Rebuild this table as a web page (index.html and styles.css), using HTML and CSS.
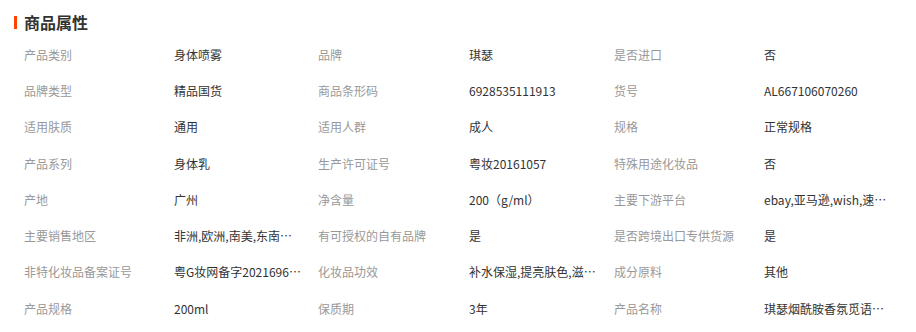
FILE: index.html
```html
<!DOCTYPE html>
<html lang="zh-CN">
<head>
<meta charset="utf-8">
<title>商品属性</title>
<link rel="stylesheet" href="styles.css">
</head>
<body>
<div class="attrs">
  <h2 class="attrs-title"><span class="attrs-bar"></span>商品属性</h2>
  <div class="attrs-grid">
    <div class="row">
      <span class="label">产品类别</span><span class="value">身体喷雾</span>
      <span class="label">品牌</span><span class="value">琪瑟</span>
      <span class="label">是否进口</span><span class="value">否</span>
    </div>
    <div class="row">
      <span class="label">品牌类型</span><span class="value">精品国货</span>
      <span class="label">商品条形码</span><span class="value">6928535111913</span>
      <span class="label">货号</span><span class="value">AL667106070260</span>
    </div>
    <div class="row">
      <span class="label">适用肤质</span><span class="value">通用</span>
      <span class="label">适用人群</span><span class="value">成人</span>
      <span class="label">规格</span><span class="value">正常规格</span>
    </div>
    <div class="row">
      <span class="label">产品系列</span><span class="value">身体乳</span>
      <span class="label">生产许可证号</span><span class="value">粤妆20161057</span>
      <span class="label">特殊用途化妆品</span><span class="value">否</span>
    </div>
    <div class="row">
      <span class="label">产地</span><span class="value">广州</span>
      <span class="label">净含量</span><span class="value">200（g/ml）</span>
      <span class="label">主要下游平台</span><span class="value">ebay,亚马逊,wish,速卖通,独立站,LAZADA</span>
    </div>
    <div class="row">
      <span class="label">主要销售地区</span><span class="value">非洲,欧洲,南美,东南亚,北美,东北亚,中东</span>
      <span class="label">有可授权的自有品牌</span><span class="value">是</span>
      <span class="label">是否跨境出口专供货源</span><span class="value">是</span>
    </div>
    <div class="row">
      <span class="label">非特化妆品备案证号</span><span class="value">粤G妆网备字2021696032</span>
      <span class="label">化妆品功效</span><span class="value">补水保湿,提亮肤色,滋润,香氛</span>
      <span class="label">成分原料</span><span class="value">其他</span>
    </div>
    <div class="row">
      <span class="label">产品规格</span><span class="value">200ml</span>
      <span class="label">保质期</span><span class="value">3年</span>
      <span class="label">产品名称</span><span class="value">琪瑟烟酰胺香氛觅语身体喷雾</span>
    </div>
  </div>
</div>
</body>
</html>
```

FILE: styles.css
```css
html, body {
  margin: 0;
  padding: 0;
  background: #fff;
}
body {
  font-family: "Noto Sans CJK SC", "Noto Sans", sans-serif;
  font-size: 12px;
  color: #333;
}
.attrs {
  width: 916px;
}
.attrs-title {
  margin: 0;
  height: 36px;
  box-sizing: border-box;
  padding: 8px 0 0 14px;
  display: flex;
  align-items: center;
  gap: 7px;
  font-size: 16px;
  line-height: 22px;
  font-weight: bold;
  color: #333;
}
.attrs-title .attrs-bar {
  display: block;
  width: 3px;
  height: 13px;
  background: #ff4400;
}
.attrs-grid {
  display: flex;
  flex-direction: column;
}
.row {
  display: grid;
  grid-template-columns: 150px 144px 151px 145px 150px 1fr;
  padding-left: 24px;
  height: 36.3px;
  align-items: center;
}
.label {
  color: #999;
  white-space: nowrap;
}
.value {
  color: #333;
  max-width: 127px;
  white-space: nowrap;
  overflow: hidden;
  text-overflow: ellipsis;
}
```
